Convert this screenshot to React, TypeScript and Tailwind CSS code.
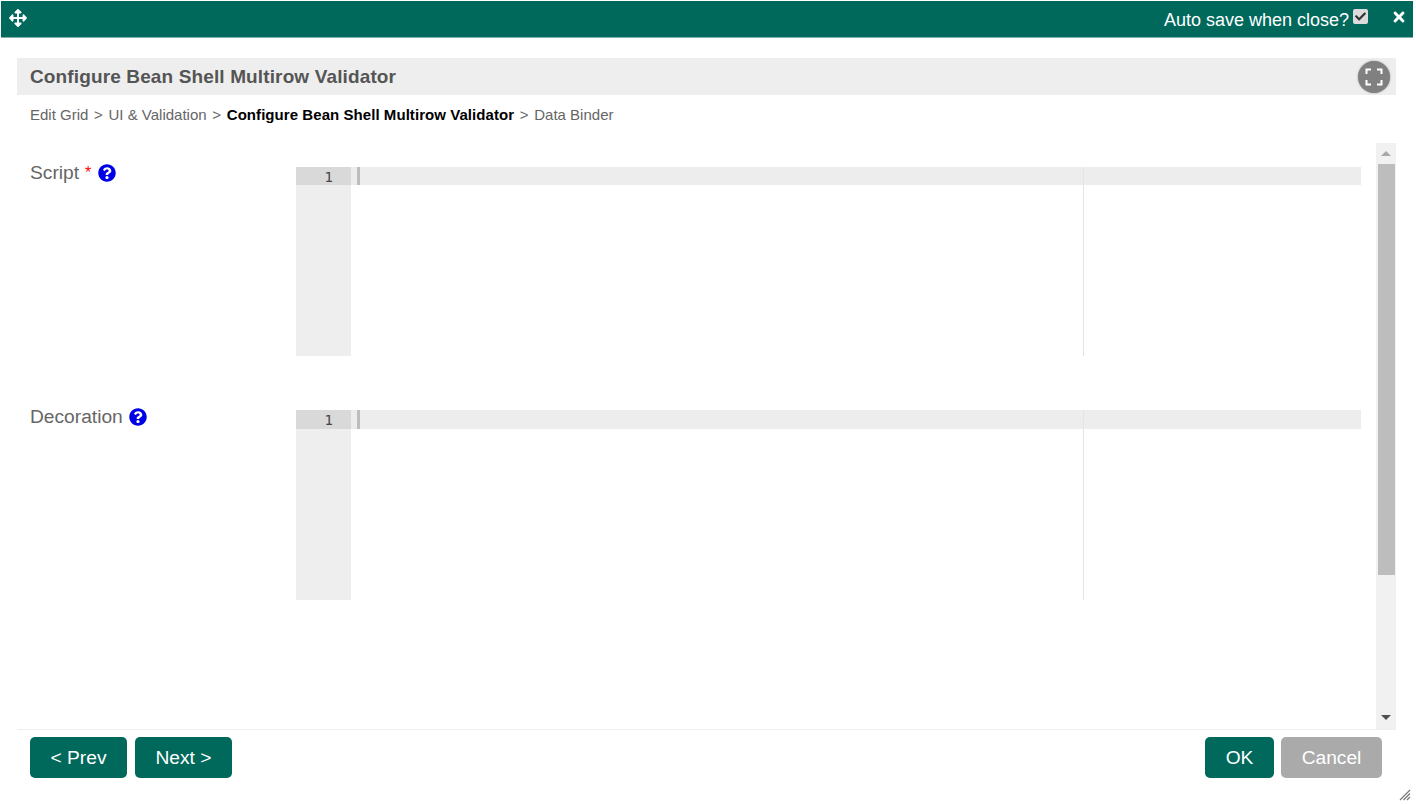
import { FaArrowsAlt, FaCheck, FaQuestionCircle, FaTimes } from "react-icons/fa";

function Editor({ activeHeight }: { activeHeight: string }) {
  return (
    <div className="relative flex h-full w-[1065px] bg-white">
      <div className="h-full w-[55px] bg-[#eeeeee]">
        <div className={`${activeHeight} bg-[#d9d9d9] pt-px pr-[18px] text-right font-['DejaVu_Sans_Mono',monospace] text-[14px] leading-[19px] text-[#444]`}>1</div>
      </div>
      <div className="flex-1">
        <div className={`${activeHeight} bg-[#ededed] pl-[6px]`}>
          <div className="h-full w-[3px] bg-[#bdbdbd]" />
        </div>
      </div>
      <div className="absolute top-0 left-[787px] h-full w-px bg-[#e4e4e4]" />
    </div>
  );
}

function Label({ text, required }: { text: string; required?: boolean }) {
  return (
    <div className={`${required ? "-mt-[5px]" : "-mt-[4px]"} flex w-[279px] items-center pl-[13px] text-[19.2px] leading-[22px] text-[#666]`}>
      <span>{text}</span>
      {required && <span className="ml-[6px] text-[16px] text-[#f00]">*</span>}
      <FaQuestionCircle className={`${required ? "ml-[7px]" : "ml-[6px]"} text-[18px] text-[#0000e6]`} />
    </div>
  );
}

export default function App() {
  return (
    <div className="h-[805px] w-[1416px] overflow-hidden bg-white pt-px font-['Liberation_Sans',Arial,sans-serif]">
      <header className="ml-px flex h-[37px] w-[1412px] items-center justify-between border-b border-[#7fb4ad] bg-[#00695c] text-white">
        <FaArrowsAlt className="mb-[3px] ml-[8px] text-[18px]" />
        <div className="flex items-center">
          <span className="pt-[2px] text-[18px] leading-[36px]">Auto save when close?</span>
          <span className="mb-[6px] ml-[4px] flex h-[15px] w-[15px] items-center justify-center rounded-[2px] bg-[#dcdcdc]">
            <FaCheck className="text-[11px] text-[#333]" />
          </span>
          <FaTimes className="mr-[6px] mb-[4px] ml-[23px] text-[16px]" />
        </div>
      </header>

      <div className="mx-[17px] mt-[20px] flex h-[37px] w-[1379px] items-center justify-between bg-[#eeeeee] pl-[13px]">
        <h1 className="pt-px text-[19px] font-bold tracking-[0.13px] text-[#555]">Configure Bean Shell Multirow Validator</h1>
        <button className="mr-[6px] flex h-[32px] w-[32px] items-center justify-center rounded-full bg-[#808080] shadow-[0_0_2px_rgba(0,0,0,0.4)]">
          <svg width="18" height="18" viewBox="0 0 18 18" fill="none" stroke="#fff" strokeWidth="2">
            <path d="M1.5 6V1.5H6M12 1.5H16.5V6M16.5 12V16.5H12M6 16.5H1.5V12" />
          </svg>
        </button>
      </div>

      <nav className="mx-[30px] flex h-[48px] items-center gap-[5.7px] pb-[7px] text-[15px] text-[#666]">
        <span>Edit Grid</span>
        <span>&gt;</span>
        <span>UI &amp; Validation</span>
        <span>&gt;</span>
        <span className="font-bold tracking-[0.06px] text-[#000]">Configure Bean Shell Multirow Validator</span>
        <span>&gt;</span>
        <span>Data Binder</span>
      </nav>

      <main className="mx-[17px] flex h-[586px] w-[1379px]">
        <div className="flex-1 pt-[24px]">
          <div className="flex h-[189px] items-start">
            <Label text="Script" required />
            <Editor activeHeight="h-[18px]" />
          </div>
          <div className="mt-[54px] flex h-[190px] items-start">
            <Label text="Decoration" />
            <Editor activeHeight="h-[19px]" />
          </div>
        </div>
        <div className="flex w-[20px] flex-col bg-[#f1f1f1]">
          <div className="flex h-[21px] items-center justify-center">
            <div className="h-0 w-0 border-x-[5px] border-b-[5px] border-x-transparent border-b-[#a8a8a8]" />
          </div>
          <div className="ml-[2px] h-[411px] w-[17px] bg-[#bdbdbd]" />
          <div className="flex flex-1 items-end justify-center pb-[9px]">
            <div className="h-0 w-0 border-x-[5px] border-t-[5px] border-x-transparent border-t-[#505050]" />
          </div>
        </div>
      </main>

      <footer className="mx-[17px] flex h-[50px] w-[1379px] justify-between border-t border-[#eeeeee] pt-[7px] pl-[13px] text-[19.2px] text-white">
        <div className="flex gap-[8px]">
          <button className="h-[41px] w-[97px] rounded-[5px] bg-[#00695c] pt-px">&lt; Prev</button>
          <button className="h-[41px] w-[97px] rounded-[5px] bg-[#00695c] pt-px">Next &gt;</button>
        </div>
        <div className="mr-[14px] flex gap-[7px]">
          <button className="h-[41px] w-[69px] rounded-[5px] bg-[#00695c] pt-px">OK</button>
          <button className="h-[41px] w-[101px] rounded-[5px] bg-[#aaaaaa] pt-px">Cancel</button>
        </div>
      </footer>

      <div className="flex justify-end pt-[10px] pr-[5px]">
        <svg width="12" height="12" viewBox="0 0 12 12" stroke="#777" strokeWidth="1.2">
          <path d="M1 11 11 1M4.5 11 11 4.5M8 11 11 8" />
        </svg>
      </div>
    </div>
  );
}
